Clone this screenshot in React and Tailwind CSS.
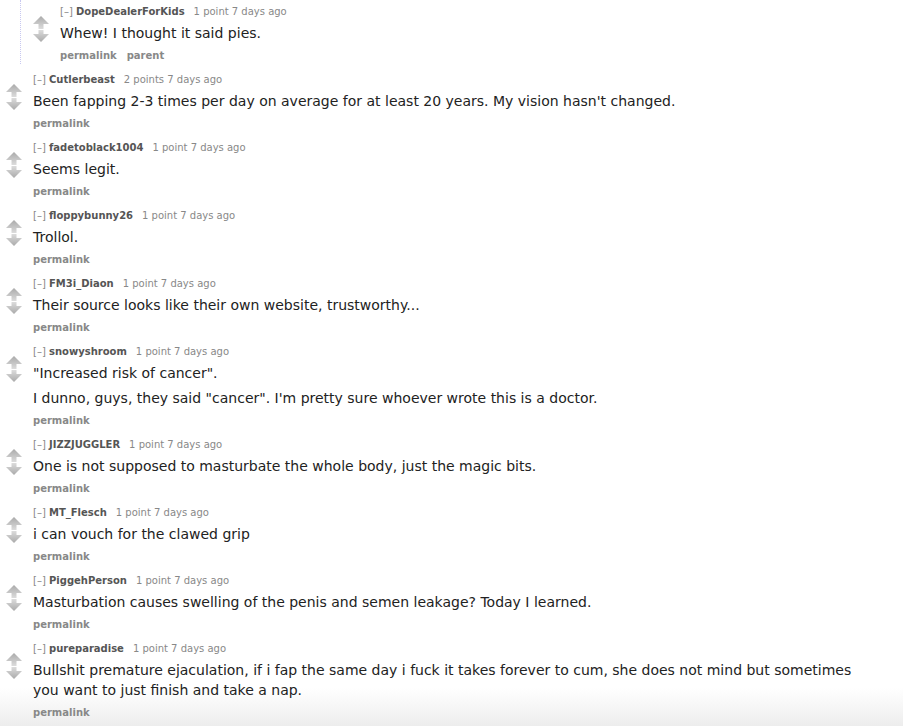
import React from "react";

const comments = [
  {
    author: "Cutlerbeast",
    points: "2 points",
    body: ["Been fapping 2-3 times per day on average for at least 20 years. My vision hasn't changed."],
  },
  { author: "fadetoblack1004", points: "1 point", body: ["Seems legit."] },
  { author: "floppybunny26", points: "1 point", body: ["Trollol."] },
  {
    author: "FM3i_Diaon",
    points: "1 point",
    body: ["Their source looks like their own website, trustworthy..."],
  },
  {
    author: "snowyshroom",
    points: "1 point",
    body: [
      '"Increased risk of cancer".',
      'I dunno, guys, they said "cancer". I\'m pretty sure whoever wrote this is a doctor.',
    ],
  },
  {
    author: "JIZZJUGGLER",
    points: "1 point",
    body: ["One is not supposed to masturbate the whole body, just the magic bits."],
  },
  { author: "MT_Flesch", points: "1 point", body: ["i can vouch for the clawed grip"] },
  {
    author: "PiggehPerson",
    points: "1 point",
    body: ["Masturbation causes swelling of the penis and semen leakage? Today I learned."],
  },
  {
    author: "pureparadise",
    points: "1 point",
    body: [
      "Bullshit premature ejaculation, if i fap the same day i fuck it takes forever to cum, she does not mind but sometimes you want to just finish and take a nap.",
    ],
  },
];

const Arrows = () => (
  <svg width="16" height="26" viewBox="0 0 16 26" className="block">
    <defs>
      <linearGradient id="arrowUp" x1="0" y1="0" x2="0" y2="1">
        <stop offset="0" stopColor="#aaaaaa" />
        <stop offset="1" stopColor="#dcdcdc" />
      </linearGradient>
      <linearGradient id="arrowDown" x1="0" y1="0" x2="0" y2="1">
        <stop offset="0" stopColor="#dcdcdc" />
        <stop offset="1" stopColor="#aaaaaa" />
      </linearGradient>
    </defs>
    <path d="M8 0 L16 8 L10.5 8 L10.5 13 L5.5 13 L5.5 8 L0 8 Z" fill="url(#arrowUp)" />
    <path d="M5.5 14 L10.5 14 L10.5 18 L16 18 L8 26 L0 18 L5.5 18 Z" fill="url(#arrowDown)" />
  </svg>
);

const Comment = ({ author, points, body, parent }) => (
  <div className="flex">
    <div className="w-[33px] shrink-0 pl-[6px] pt-[12px]">
      <Arrows />
    </div>
    <div className="min-w-0 flex-1">
      <p className="text-[10px] leading-[16px] text-[#888]">
        [–] <span className="font-bold text-[#555]">{author}</span>
        <span className="ml-[9px]">{points} 7 days ago</span>
      </p>
      <div className="mt-[3px] flex flex-col gap-[5px] text-[14px] leading-[20px] text-[#222]">
        {body.map((line, i) => (
          <p key={i}>{line}</p>
        ))}
      </div>
      <div className="mt-[5px] flex gap-[10px] text-[10px] font-bold leading-[16px] text-[#888]">
        <span>permalink</span>
        {parent && <span>parent</span>}
      </div>
    </div>
  </div>
);

export default function App() {
  return (
    <div
      className="h-[726px] overflow-hidden bg-[linear-gradient(to_bottom,#ffffff_688px,#ededed_726px)] pr-[30px] pt-[4px]"
      style={{ fontFamily: '"DejaVu Sans", Verdana, sans-serif' }}
    >
      <div className="mb-[8px] ml-[20px] -mt-[4px] border-l border-dotted border-[#c8c8f0] pl-[6px] pt-[4px]">
        <Comment
          author="DopeDealerForKids"
          points="1 point"
          body={["Whew! I thought it said pies."]}
          parent
        />
      </div>
      <div className="flex flex-col gap-[8px]">
        {comments.map((c) => (
          <Comment key={c.author} {...c} />
        ))}
      </div>
    </div>
  );
}
